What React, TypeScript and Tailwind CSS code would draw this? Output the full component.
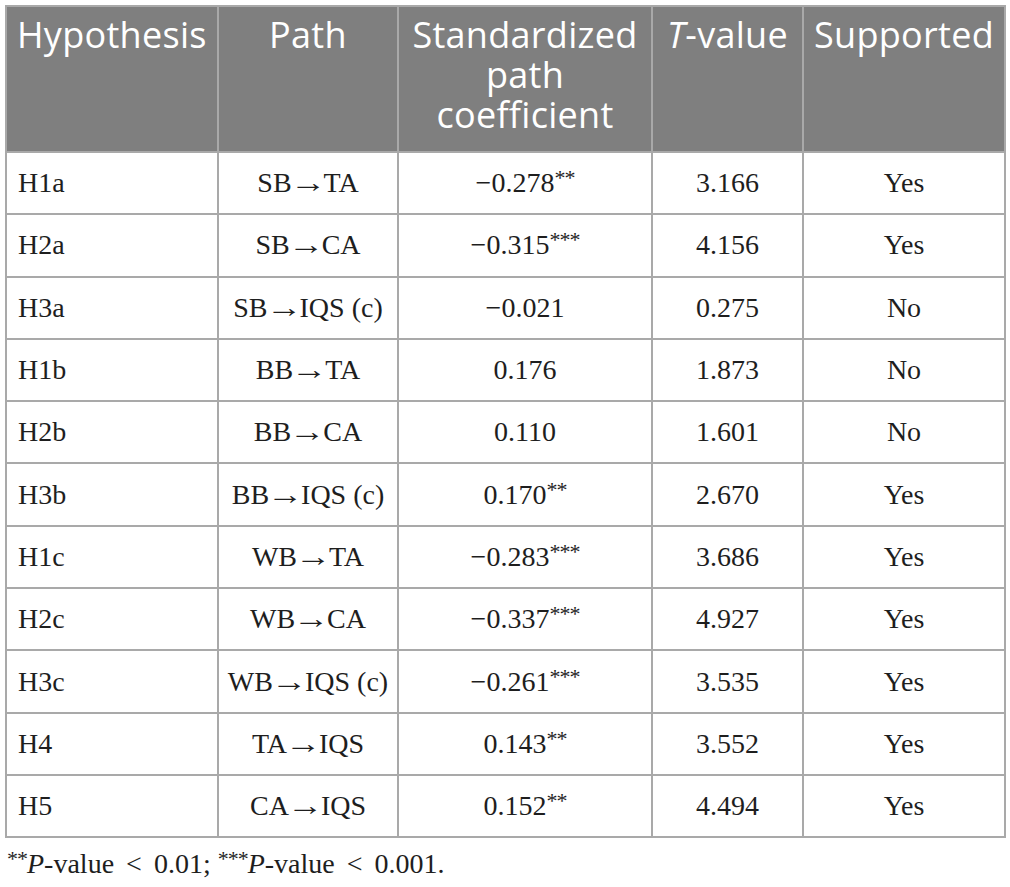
import React from 'react';

const rows = [
  { id: 'H1a', path: 'SB→TA', coef: '−0.278', stars: '**', t: '3.166', ok: 'Yes' },
  { id: 'H2a', path: 'SB→CA', coef: '−0.315', stars: '***', t: '4.156', ok: 'Yes' },
  { id: 'H3a', path: 'SB→IQS (c)', coef: '−0.021', stars: '', t: '0.275', ok: 'No' },
  { id: 'H1b', path: 'BB→TA', coef: '0.176', stars: '', t: '1.873', ok: 'No' },
  { id: 'H2b', path: 'BB→CA', coef: '0.110', stars: '', t: '1.601', ok: 'No' },
  { id: 'H3b', path: 'BB→IQS (c)', coef: '0.170', stars: '**', t: '2.670', ok: 'Yes' },
  { id: 'H1c', path: 'WB→TA', coef: '−0.283', stars: '***', t: '3.686', ok: 'Yes' },
  { id: 'H2c', path: 'WB→CA', coef: '−0.337', stars: '***', t: '4.927', ok: 'Yes' },
  { id: 'H3c', path: 'WB→IQS (c)', coef: '−0.261', stars: '***', t: '3.535', ok: 'Yes' },
  { id: 'H4', path: 'TA→IQS', coef: '0.143', stars: '**', t: '3.552', ok: 'Yes' },
  { id: 'H5', path: 'CA→IQS', coef: '0.152', stars: '**', t: '4.494', ok: 'Yes' },
];

const Stars = ({ s }: { s: string }) =>
  s ? <span className="relative -top-[7px] text-[22px] tracking-[-1px]">{s}</span> : null;

// "SB→TA" with the long thin arrow of the reference
const Path = ({ p }: { p: string }) => {
  const [a, b] = p.split('→');
  return (
    <>
      {a}
      <span className="inline-block scale-x-[1.3] mx-[2px]">→</span>
      {b}
    </>
  );
};

const App = () => {
  const th = 'border-2 border-[#a9a9a9] align-top pt-[8px] pb-[16px] font-normal';
  const td = 'border-2 border-[#a9a9a9] h-[62.3px] p-0 align-middle';

  return (
    <div className="min-h-screen w-[1010px] bg-white pt-[5px] pl-[5px]">
      <table className="table-fixed border-collapse w-[999px]">
        <colgroup>
          <col className="w-[212px]" />
          <col className="w-[180px]" />
          <col className="w-[254px]" />
          <col className="w-[151px]" />
          <col className="w-[202px]" />
        </colgroup>
        <thead>
          <tr className="bg-[#7f7f7f] text-white text-[36px] leading-[40px] tracking-[0.3px] font-['Open_Sans',sans-serif]">
            <th className={`${th} text-left pl-[10px]`}>Hypothesis</th>
            <th className={`${th} text-center`}>Path</th>
            <th className={`${th} text-center`}>Standardized path coefficient</th>
            <th className={`${th} text-center`}><i>T</i>-value</th>
            <th className={`${th} text-center`}>Supported</th>
          </tr>
        </thead>
        <tbody className="font-['Liberation_Serif',serif] text-[28px] text-[#1e1e1e]">
          {rows.map(r => (
            <tr key={r.id}>
              <td className={`${td} text-left pl-[11px]`}>{r.id}</td>
              <td className={`${td} text-center`}><Path p={r.path} /></td>
              <td className={`${td} text-center`}>
                {r.coef}
                <Stars s={r.stars} />
              </td>
              <td className={`${td} text-center`}>{r.t}</td>
              <td className={`${td} text-center`}>{r.ok}</td>
            </tr>
          ))}
        </tbody>
      </table>
      <p className="mt-[8px] pl-[2px] font-['Liberation_Serif',serif] text-[28px] leading-[36px] text-[#1e1e1e]">
        <Stars s="**" /><i>P</i>-value <span className="mx-[5px]">&lt;</span> 0.01; <Stars s="***" /><i>P</i>-value <span className="mx-[5px]">&lt;</span> 0.001.
      </p>
    </div>
  );
};

export default App;
